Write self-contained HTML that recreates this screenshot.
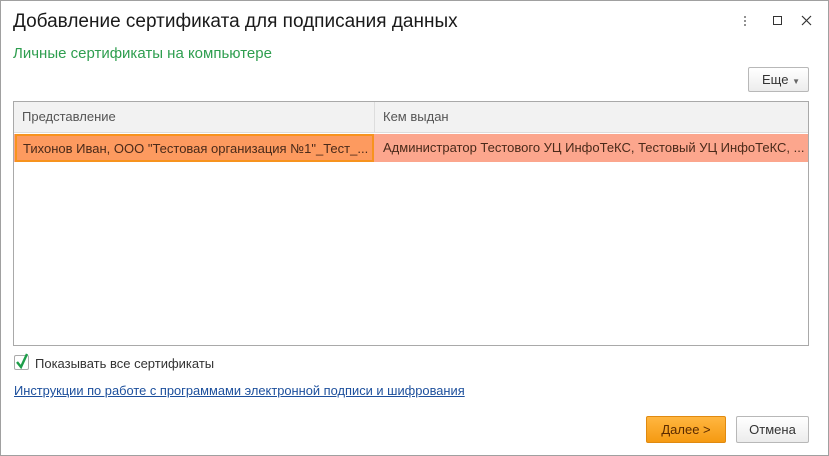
<!DOCTYPE html>
<html><head><meta charset="utf-8"><style>
*{box-sizing:border-box;margin:0;padding:0}
body{width:829px;height:456px;background:#fff;font-family:"Liberation Sans",Arial,sans-serif;position:relative;overflow:hidden;color:#333}
.win{position:absolute;left:0;top:0;width:829px;height:456px;border:1px solid #a0a0a0}
.abs{position:absolute;white-space:nowrap}
.title{left:13px;top:11px;font-size:19px;color:#1a1a1a}
.sub{left:13px;top:45px;font-size:15px;color:#2e9e4f}
.btn{position:absolute;border:1px solid #b8b8b8;border-radius:2px;background:linear-gradient(#fff,#ececec);font-size:13px;text-align:center;color:#333}
.table{position:absolute;left:13px;top:101px;width:796px;height:245px;border:1px solid #a9a9a9}
.hdr{position:absolute;left:0;top:0;width:794px;height:31px;background:#f2f2f2;border-bottom:1px solid #ddd;font-size:13px;color:#555}
.row{position:absolute;left:0;top:32px;width:794px;height:28px;background:#fca68d;font-size:13px;color:#4a2a1a}
.cell1{position:absolute;left:1px;top:0;width:359px;height:28px;background:#fd9a5f;border:2px solid #f7931e;padding:5px 0 0 6px}
</style></head><body>
<div class="win"></div>
<div class="abs title">Добавление сертификата для подписания данных</div>
<div class="abs" style="left:744px;top:15px;width:2px;height:12px;background:radial-gradient(circle,#888 1px,transparent 1.2px) 0 0/2px 4px"></div>
<div class="abs" style="left:773px;top:16px;width:9px;height:9px;border:1px solid #333"></div>
<svg class="abs" style="left:801px;top:15px" width="11" height="11"><path d="M1 1L10 10M10 1L1 10" stroke="#333" stroke-width="1.2"/></svg>
<div class="abs sub">Личные сертификаты на компьютере</div>
<div class="btn" style="left:748px;top:67px;width:61px;height:25px;padding-top:4px;text-align:left;padding-left:13px">Еще <span style="font-size:8px;color:#666">▼</span></div>
<div class="table">
 <div class="hdr"><span class="abs" style="left:8px;top:7px">Представление</span><div class="abs" style="left:360px;top:0;width:1px;height:31px;background:#ddd"></div><span class="abs" style="left:369px;top:7px">Кем выдан</span></div>
 <div class="row"><div class="cell1">Тихонов Иван, ООО "Тестовая организация №1"_Тест_...</div><span class="abs" style="left:369px;top:6px">Администратор Тестового УЦ ИнфоТеКС, Тестовый УЦ ИнфоТеКС, ...</span></div>
</div>
<div class="abs" style="left:14px;top:355px;width:15px;height:15px;border:1px solid #aaa;border-radius:2px;background:#fff"></div>
<svg class="abs" style="left:15px;top:353px" width="14" height="16"><path d="M2 9L6 14L12 1" stroke="#1e9e4a" stroke-width="2.4" fill="none"/></svg>
<div class="abs" style="left:35px;top:356px;font-size:13px;color:#333">Показывать все сертификаты</div>
<div class="abs" style="left:14px;top:383px;font-size:13px;color:#1c4f9c;text-decoration:underline;transform:scaleX(0.99);transform-origin:left">Инструкции по работе с программами электронной подписи и шифрования</div>
<div class="btn" style="left:646px;top:416px;width:80px;height:27px;padding-top:5px;background:linear-gradient(#ffb640,#f59a12);border-color:#e08a10;color:#5a2a00">Далее &gt;</div>
<div class="btn" style="left:736px;top:416px;width:73px;height:27px;padding-top:5px">Отмена</div>
</body></html>
